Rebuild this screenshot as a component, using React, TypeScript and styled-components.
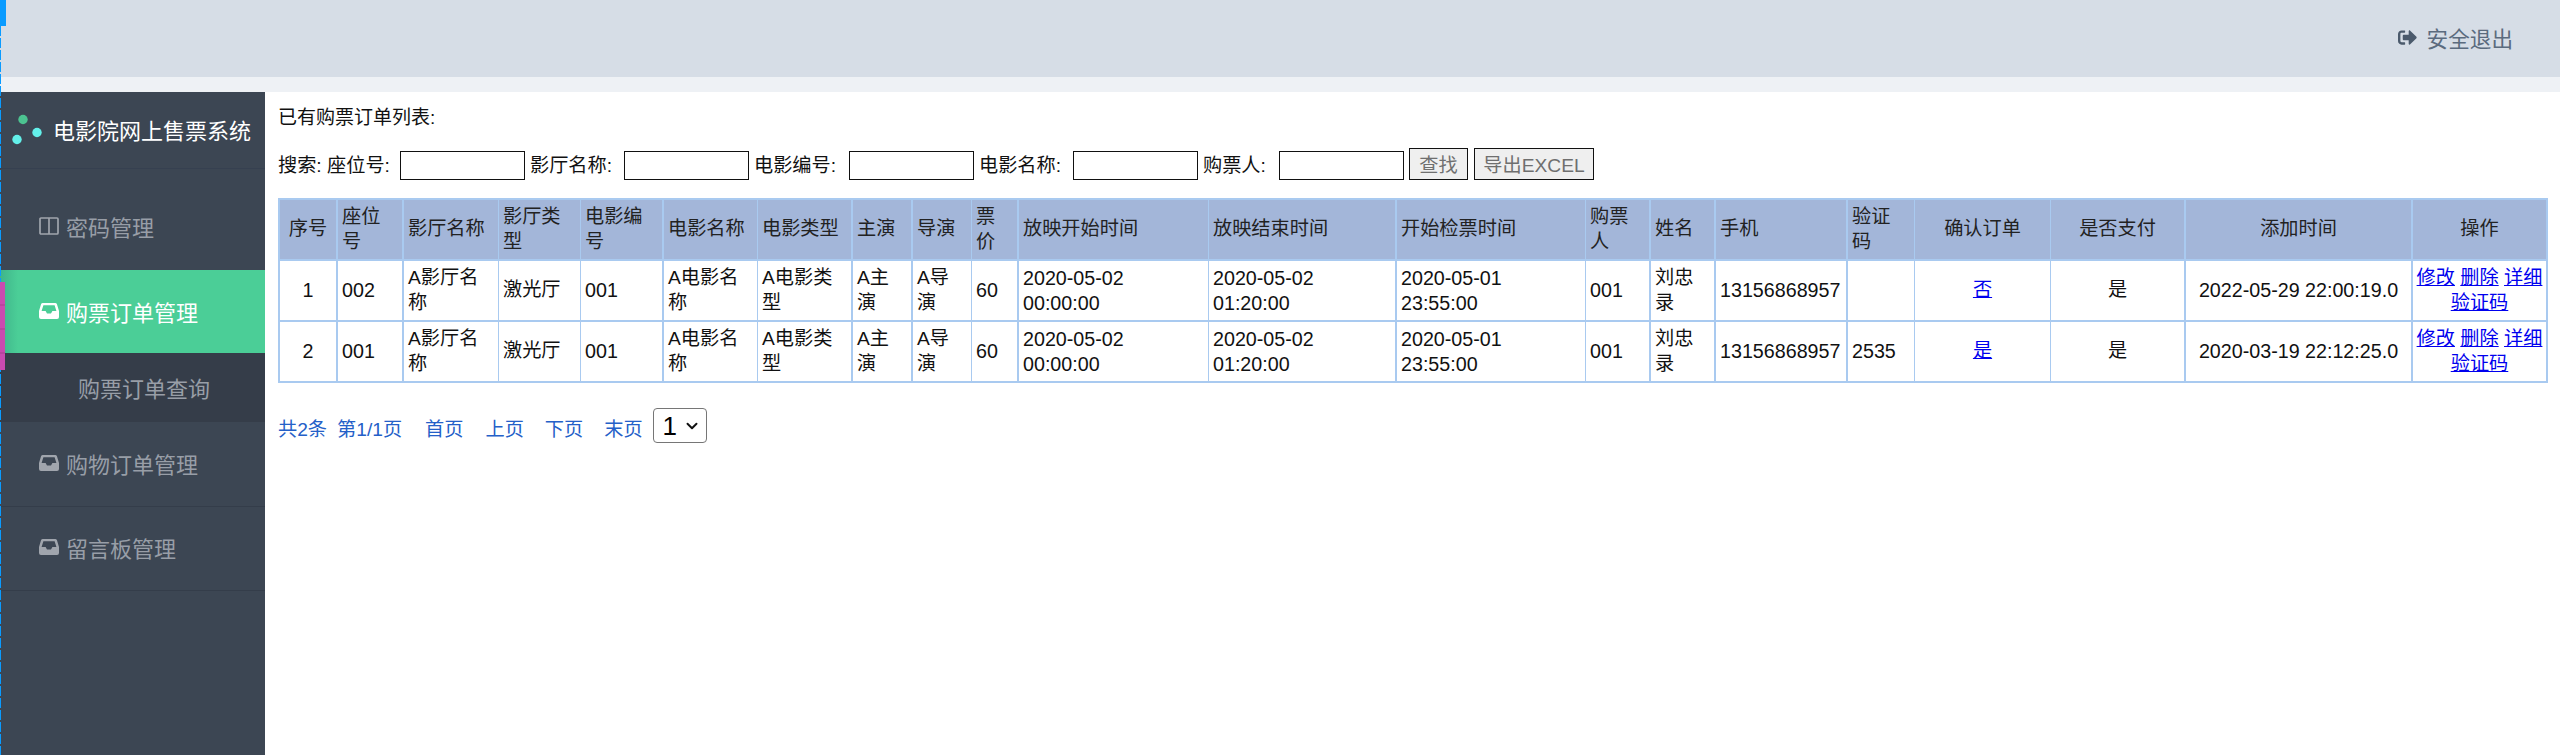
import React from "react";
import styled, { createGlobalStyle } from "styled-components";
import { FaSignOutAlt } from "react-icons/fa";
import { ChevronDown } from "lucide-react";

const Global = createGlobalStyle`
  html, body { margin: 0; padding: 0; height: 100%; overflow: hidden; background: #fff; }
  * { box-sizing: border-box; }
  body { font-family: "Liberation Sans", "Noto Sans CJK SC", sans-serif; font-size: 19.2px; color: #111; }
`;

const Page = styled.div`
  position: relative;
  display: flex;
  flex-direction: column;
  width: 2560px;
  height: 755px;
  overflow: hidden;
`;
const TopBar = styled.header`
  height: 77px;
  flex: none;
  background: #d6dde6;
  display: flex;
  align-items: center;
  justify-content: flex-end;
  padding: 0 47px 2px 0;
`;
const Logout = styled.div`
  display: flex;
  align-items: center;
  gap: 10px;
  font-size: 21.6px;
  color: #5b6b7e;
  svg { width: 19px; height: 19px; color: #4b5a6c; }
`;
const Strip = styled.div`
  height: 15px;
  flex: none;
  background: #eef1f5;
`;
const Body = styled.div`
  flex: 1;
  display: flex;
  min-height: 0;
`;
const Sidebar = styled.aside`
  width: 265px;
  flex: none;
  background: #3c4653;
  display: flex;
  flex-direction: column;
`;
const Brand = styled.div`
  height: 77px;
  flex: none;
  display: flex;
  align-items: center;
  gap: 9px;
  padding: 0 0 2px 11px;
  border-bottom: 1px solid #364050;
  color: #fff;
  font-size: 22px;
  white-space: nowrap;
  svg { flex: none; margin-top: 2px; }
`;
const MenuItem = styled.div<{ $h: number; $active?: boolean; $line?: boolean; $shift?: number }>`
  height: ${(p) => p.$h}px;
  flex: none;
  display: flex;
  align-items: center;
  gap: 7px;
  padding: ${(p) => Math.max(p.$shift ?? 0, 0)}px 0 ${(p) => Math.max(-(p.$shift ?? 0), 0)}px 39px;
  font-size: 22px;
  color: ${(p) => (p.$active ? "#fff" : "#989ea7")};
  background: ${(p) =>
    p.$active ? "linear-gradient(90deg, #3fb48a 0, #4bce97 18px)" : "transparent"};
  border-bottom: ${(p) => (p.$line ? "1px solid #343d4a" : "none")};
  svg { width: 20px; height: 20px; flex: none; color: ${(p) => (p.$active ? "#fff" : "#a0a5ad")}; }
`;
const SubItem = styled.div`
  height: 69px;
  flex: none;
  display: flex;
  align-items: center;
  padding: 0 0 2px 78px;
  font-size: 22px;
  color: #989ea7;
  background: #353d49;
`;
const Main = styled.main`
  flex: 1;
  min-width: 0;
  padding: 14px 12px 0 13px;
  display: flex;
  flex-direction: column;
  align-items: flex-start;
`;
const Title = styled.div`
  height: 24px;
  line-height: 24px;
  font-size: 19px;
  white-space: nowrap;
`;
const SearchRow = styled.div`
  display: flex;
  align-items: flex-end;
  height: 32px;
  margin-top: 18px;
  white-space: nowrap;
`;
const Field = styled.span<{ $w: number }>`
  width: ${(p) => p.$w}px;
  flex: none;
  align-self: center;
`;
const SearchInput = styled.input`
  width: 125px;
  height: 29px;
  flex: none;
  padding: 0;
  background: #fff;
  border: 1.5px solid #111;
  border-radius: 0;
  margin-right: 5px;
`;
const SearchButton = styled.button<{ $w: number }>`
  width: ${(p) => p.$w}px;
  height: 32px;
  flex: none;
  padding: 0;
  margin-right: 6px;
  font: inherit;
  color: #6f6f6f;
  background: #efefef;
  border: 1.5px solid #111;
  border-radius: 0;
`;
const Table = styled.table`
  margin-top: 18px;
  table-layout: fixed;
  width: 2270px;
  border-collapse: separate;
  border-spacing: 0;
  border-top: 2px solid #a9caf0;
  border-left: 2px solid #a9caf0;
`;
const Head = styled.th<{ $center?: boolean; $edge: number }>`
  height: 61px;
  padding: ${(p) => (p.$center ? "0 1px" : "0 5px 0 4px")};
  font-weight: 400;
  line-height: 24.4px;
  color: #222;
  background: #a3b6d9;
  text-align: ${(p) => (p.$center ? "center" : "left")};
  border-right: ${(p) => p.$edge}px solid #a9caf0;
  border-bottom: 2px solid #a9caf0;
`;
const Cell = styled.td<{ $center?: boolean; $edge: number; $num?: boolean }>`
  height: 61px;
  padding: ${(p) => (p.$center ? "0 1px" : "0 5px 0 4px")};
  font-size: ${(p) => (p.$num ? "19.7px" : "19.2px")};
  line-height: 24.4px;
  color: #111;
  background: #fff;
  text-align: ${(p) => (p.$center ? "center" : "left")};
  border-right: ${(p) => p.$edge}px solid #a9caf0;
  border-bottom: 2px solid #a9caf0;
  word-break: break-all;
`;
const ActionLink = styled.a`
  font-size: 19.2px;
  color: #0000ee;
  text-decoration: underline;
`;
const Pager = styled.div`
  display: flex;
  align-items: center;
  height: 35px;
  margin-top: 25px;
  color: #2460c8;
  white-space: nowrap;
`;
const PagerItem = styled.span<{ $gap: number }>`
  margin-right: ${(p) => p.$gap}px;
  padding-top: 4px;
`;
const SelectWrap = styled.span`
  position: relative;
  display: inline-block;
  width: 54px;
  height: 35px;
  svg {
    position: absolute;
    right: 6px;
    top: 9px;
    width: 18px;
    height: 18px;
    color: #111;
    pointer-events: none;
  }
`;
const PageSelect = styled.select`
  appearance: none;
  display: block;
  width: 54px;
  height: 35px;
  font-family: "Liberation Sans", sans-serif;
  font-size: 26px;
  color: #000;
  background: #fff;
  border: 1px solid #767676;
  border-radius: 4px;
  padding: 0 0 0 9px;
`;
const EdgeLine = styled.div`
  position: absolute;
  left: 0;
  top: 26px;
  bottom: 0;
  width: 1px;
  background: repeating-linear-gradient(180deg, #0a9bff 0 10px, transparent 10px 12px);
`;
const EdgeBlock = styled.div`
  position: absolute;
  left: 0;
  top: 0;
  width: 6px;
  height: 26px;
  background: #0a9bff;
`;
const ActiveMark = styled.div`
  position: absolute;
  left: 0;
  top: 282px;
  width: 5px;
  height: 88px;
  background: repeating-linear-gradient(180deg, #c94ab0 0 22px, #b8459f 22px 24px);
`;

type Col = { w: number; edge: number; label: string; center?: boolean; num?: boolean };
const columns: Col[] = [
  { w: 58, edge: 2, label: "序号", center: true, num: true },
  { w: 66, edge: 2, label: "座位号", num: true },
  { w: 95, edge: 1, label: "影厅名称" },
  { w: 82, edge: 1, label: "影厅类型" },
  { w: 83, edge: 2, label: "电影编号", num: true },
  { w: 94, edge: 1, label: "电影名称" },
  { w: 95, edge: 2, label: "电影类型" },
  { w: 60, edge: 2, label: "主演" },
  { w: 59, edge: 1, label: "导演" },
  { w: 47, edge: 2, label: "票价", num: true },
  { w: 190, edge: 1, label: "放映开始时间", num: true },
  { w: 188, edge: 2, label: "放映结束时间", num: true },
  { w: 189, edge: 1, label: "开始检票时间", num: true },
  { w: 65, edge: 2, label: "购票人", num: true },
  { w: 65, edge: 2, label: "姓名" },
  { w: 132, edge: 2, label: "手机", num: true },
  { w: 67, edge: 1, label: "验证码", num: true },
  { w: 136, edge: 1, label: "确认订单", center: true },
  { w: 135, edge: 2, label: "是否支付", center: true },
  { w: 227, edge: 2, label: "添加时间", center: true, num: true },
  { w: 135, edge: 2, label: "操作", center: true },
];

const Stamp = ({ a, b }: { a: string; b: string }) => (
  <>
    {a}
    <br />
    {b}
  </>
);
const Actions = () => (
  <>
    <ActionLink>修改</ActionLink> <ActionLink>删除</ActionLink> <ActionLink>详细</ActionLink>{" "}
    <ActionLink>验证码</ActionLink>
  </>
);

const rows = [
  { no: "1", seat: "002", code: "", confirm: "否", added: "2022-05-29 22:00:19.0" },
  { no: "2", seat: "001", code: "2535", confirm: "是", added: "2020-03-19 22:12:25.0" },
];

const rowCells = (r: (typeof rows)[number]): React.ReactNode[] => [
  r.no,
  r.seat,
  "A影厅名称",
  "激光厅",
  "001",
  "A电影名称",
  "A电影类型",
  "A主演",
  "A导演",
  "60",
  <Stamp a="2020-05-02" b="00:00:00" />,
  <Stamp a="2020-05-02" b="01:20:00" />,
  <Stamp a="2020-05-01" b="23:55:00" />,
  "001",
  "刘忠录",
  "13156868957",
  r.code,
  <ActionLink>{r.confirm}</ActionLink>,
  "是",
  r.added,
  <Actions />,
];

const Dots = () => (
  <svg width="33" height="36" viewBox="0 0 33 36">
    <circle cx="12" cy="7.5" r="4.7" fill="#4cc391" />
    <circle cx="26" cy="20.5" r="4.7" fill="#63f0ea" />
    <circle cx="6" cy="27.5" r="4.7" fill="#63f0ea" />
  </svg>
);
const PanelIcon = () => (
  <svg viewBox="0 0 20 20" fill="none" stroke="currentColor" strokeWidth="1.7">
    <rect x="1" y="2" width="18" height="16" rx="1" />
    <path d="M10 2v16" />
  </svg>
);
const InboxIcon = () => (
  <svg viewBox="0 0 20 20" fill="currentColor">
    <path
      fillRule="evenodd"
      d="M3.8 2H16.2Q17.4 2 17.9 3.1L20 10V16Q20 18 18 18H2Q0 18 0 16V10L2.1 3.1Q2.6 2 3.8 2ZM4.4 4.2L2.6 10H6.6L8 12.6H12L13.4 10H17.4L15.6 4.2Z"
    />
  </svg>
);

export default function App() {
  return (
    <Page>
      <Global />
      <TopBar>
        <Logout>
          <FaSignOutAlt />
          安全退出
        </Logout>
      </TopBar>
      <Strip />
      <Body>
        <Sidebar>
          <Brand>
            <Dots />
            电影院网上售票系统
          </Brand>
          <MenuItem $h={101} $shift={12}>
            <PanelIcon />
            密码管理
          </MenuItem>
          <MenuItem $h={83} $active $shift={-2}>
            <InboxIcon />
            购票订单管理
          </MenuItem>
          <SubItem>购票订单查询</SubItem>
          <MenuItem $h={85} $line $shift={-2}>
            <InboxIcon />
            购物订单管理
          </MenuItem>
          <MenuItem $h={84} $line $shift={-4}>
            <InboxIcon />
            留言板管理
          </MenuItem>
        </Sidebar>
        <Main>
          <Title>已有购票订单列表:</Title>
          <SearchRow>
            <Field $w={122}>搜索: 座位号:</Field>
            <SearchInput />
            <Field $w={94}>影厅名称:</Field>
            <SearchInput />
            <Field $w={95}>电影编号:</Field>
            <SearchInput />
            <Field $w={94}>电影名称:</Field>
            <SearchInput />
            <Field $w={76}>购票人:</Field>
            <SearchInput />
            <SearchButton $w={59}>查找</SearchButton>
            <SearchButton $w={120}>导出EXCEL</SearchButton>
          </SearchRow>
          <Table>
            <colgroup>
              {columns.map((c) => (
                <col key={c.label} width={c.w} />
              ))}
            </colgroup>
            <thead>
              <tr>
                {columns.map((c) => (
                  <Head key={c.label} $center={c.center} $edge={c.edge}>
                    {c.label}
                  </Head>
                ))}
              </tr>
            </thead>
            <tbody>
              {rows.map((r) => (
                <tr key={r.no}>
                  {rowCells(r).map((v, i) => (
                    <Cell key={i} $center={columns[i].center} $edge={columns[i].edge} $num={columns[i].num}>
                      {v}
                    </Cell>
                  ))}
                </tr>
              ))}
            </tbody>
          </Table>
          <Pager>
            <PagerItem $gap={10}>共2条</PagerItem>
            <PagerItem $gap={23}>第1/1页</PagerItem>
            <PagerItem $gap={22}>首页</PagerItem>
            <PagerItem $gap={21}>上页</PagerItem>
            <PagerItem $gap={21}>下页</PagerItem>
            <PagerItem $gap={10}>末页</PagerItem>
            <SelectWrap>
              <PageSelect defaultValue="1">
                <option value="1">1</option>
              </PageSelect>
              <ChevronDown strokeWidth={2.6} />
            </SelectWrap>
          </Pager>
        </Main>
      </Body>
      <EdgeBlock />
      <EdgeLine />
      <ActiveMark />
    </Page>
  );
}
